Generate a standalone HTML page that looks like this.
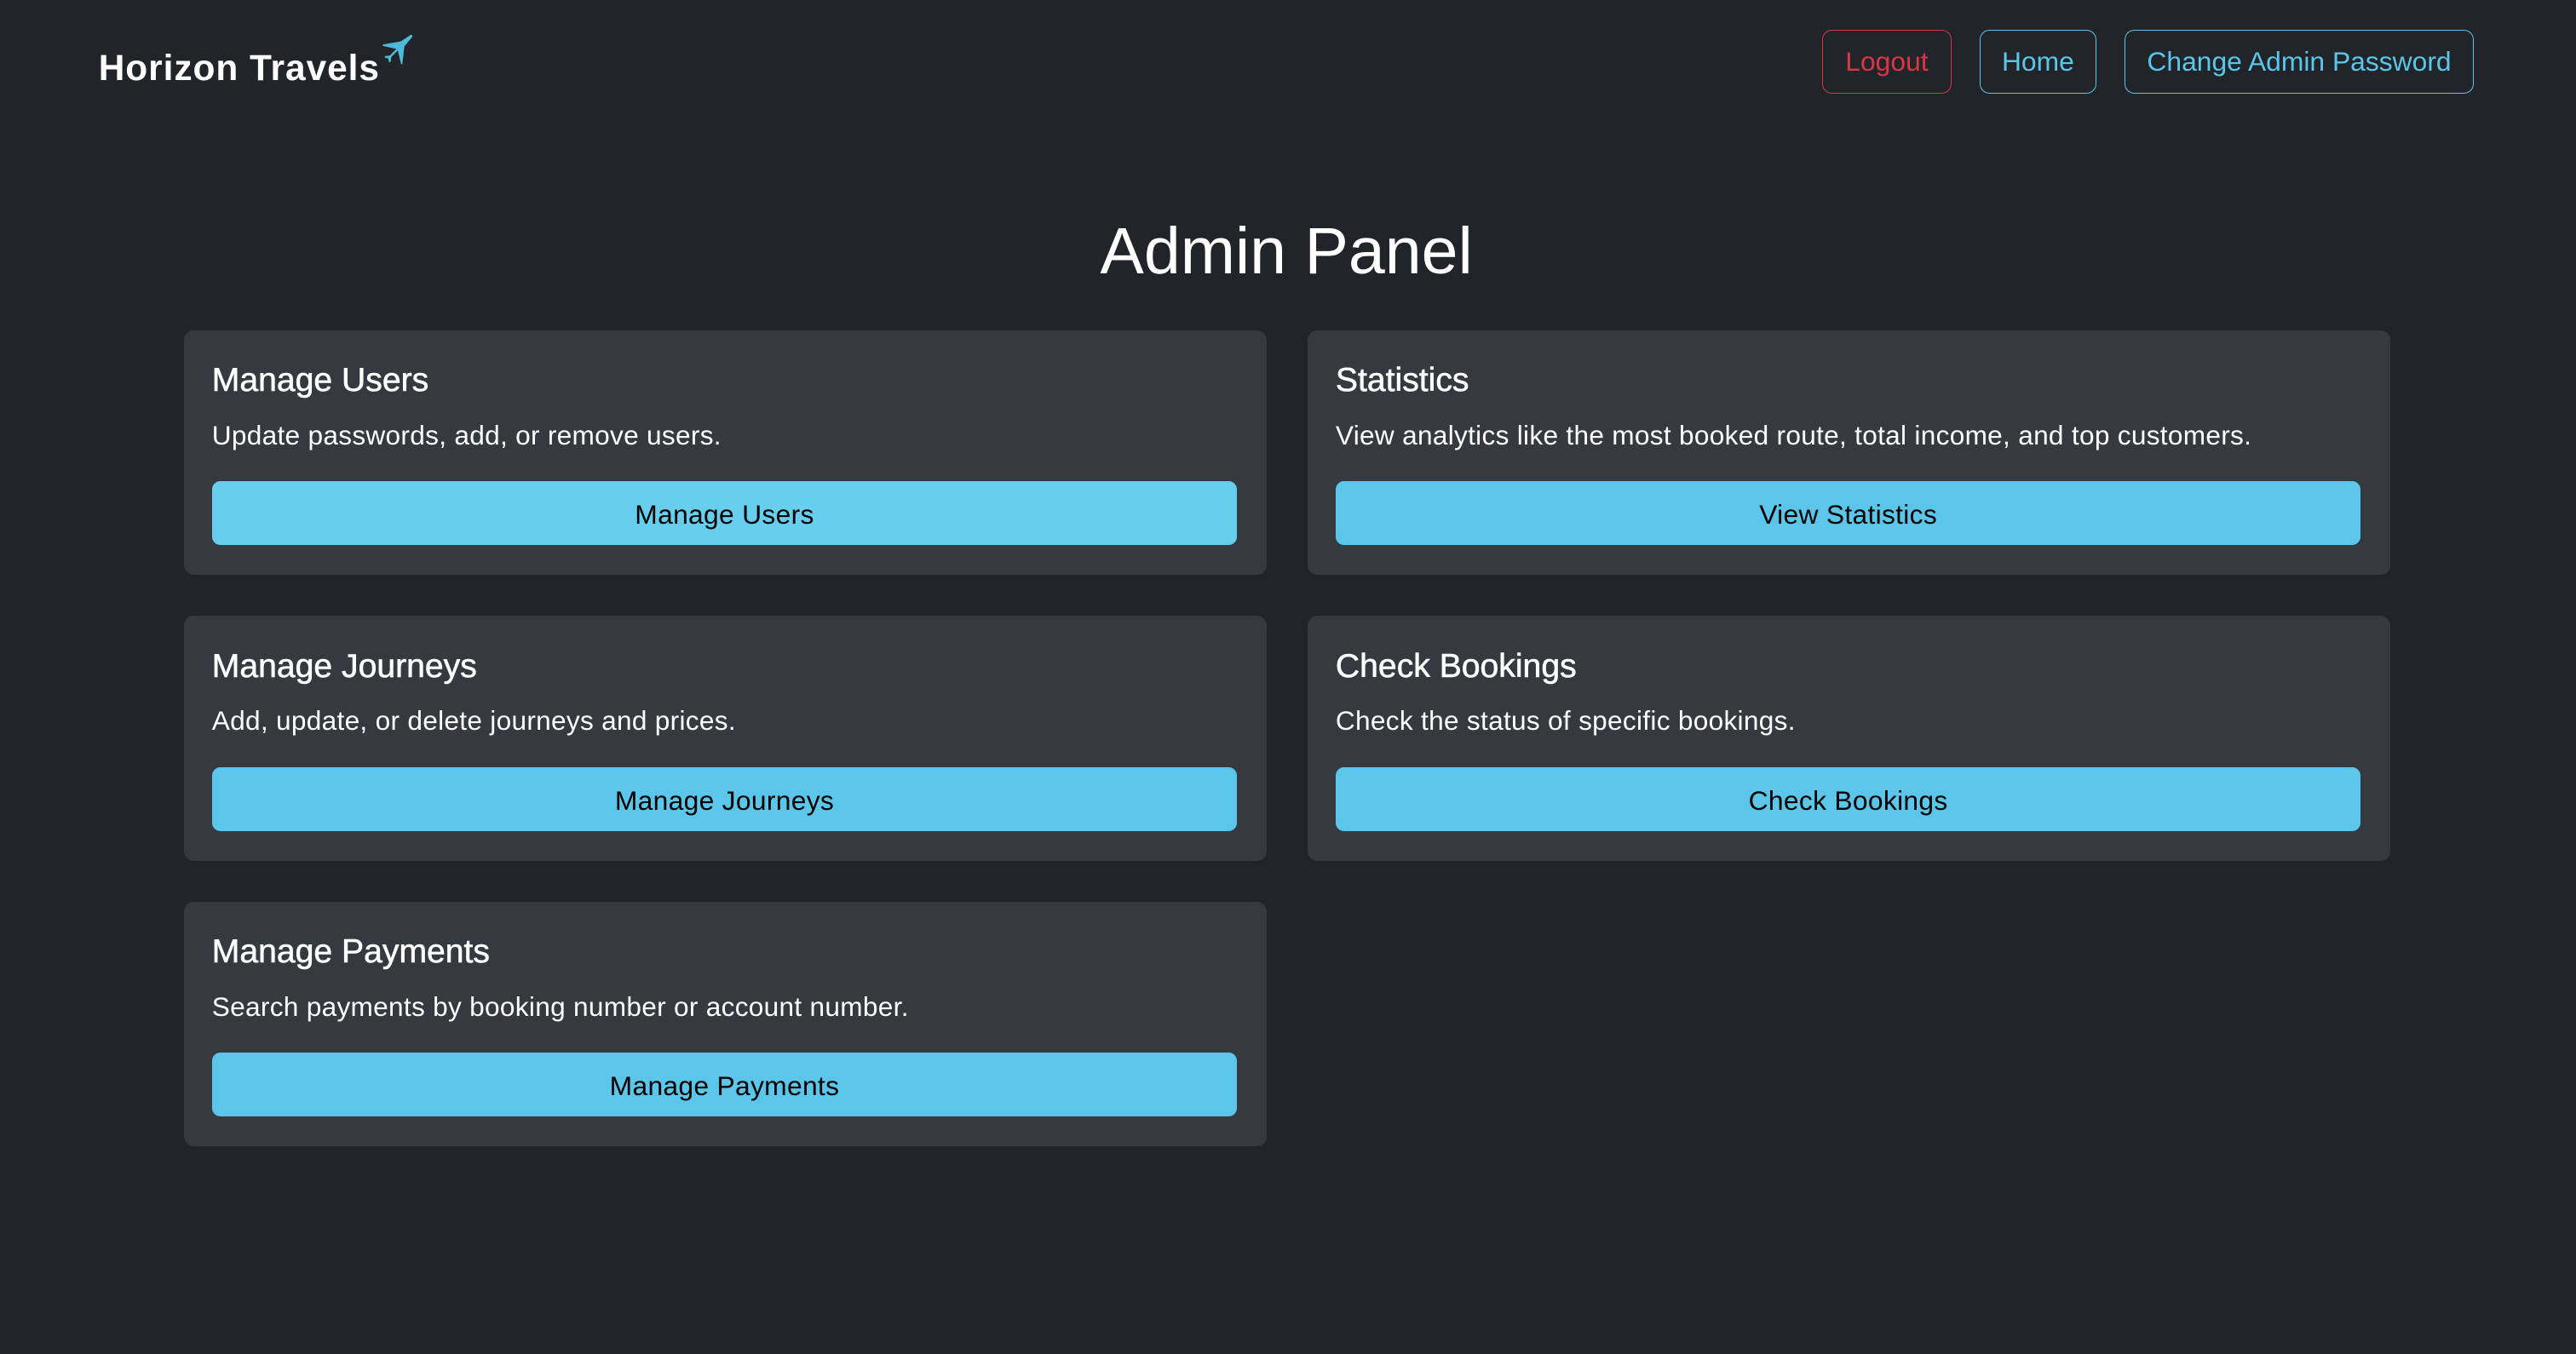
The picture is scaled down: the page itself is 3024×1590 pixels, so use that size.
<!DOCTYPE html>
<html><head><meta charset="utf-8"><style>
html,body{margin:0;padding:0;background:#212529;overflow:hidden}
#w{zoom:1.928571;width:1568px;height:824px;position:relative;background:#212529;font-family:"Liberation Sans",sans-serif;color:#fff}
.logo{position:absolute;left:60px;top:29px;font-size:22px;font-weight:bold;letter-spacing:0.5px}
.plane{position:absolute;left:228px;top:20px}
.nb{position:absolute;top:18px;height:39px;box-sizing:border-box;border:1px solid #5bc6e9;border-radius:6px;color:#5bc6e9;font-size:16.5px;line-height:38px;text-align:center}
h1{position:absolute;left:0;width:1566px;top:129px;margin:0;text-align:center;font-size:40px;font-weight:normal;line-height:48px}
.card{position:absolute;width:659px;height:149px;background:#343a40;border-radius:6px}
.card h2{position:absolute;left:17px;top:19px;margin:0;font-size:20.3px;font-weight:normal;line-height:24px;-webkit-text-stroke:0.3px #fff}
.card p{position:absolute;left:17px;top:54px;margin:0;font-size:16.4px;line-height:20px;letter-spacing:0.15px}
.card .b{position:absolute;left:17px;top:92px;width:624px;height:39px;background:#5bc6e9;border-radius:5px;color:#000;font-size:16.5px;line-height:41px;text-align:center;letter-spacing:0.15px}
</style></head><body><div id="w">
<div class="logo">Horizon Travels</div>
<svg class="plane" width="24" height="24" viewBox="0 0 24 24"><path fill="#4fb9d9" d="M21.5 1.2c1-.6 1.8.2 1.2 1.2L18 8l-1.2 10.5c-.1.7-.8.7-.9 0L14 10.5 10 14.5l-.3 2.8-1 .5-.5-2.4-2.3-.6.4-.9 2.8-.3 4-4L5.2 7.8c-.7-.2-.6-.9.1-1L15.8 5z"/></svg>
<div class="nb" style="left:1109px;width:79px;border-color:#dc3545;color:#dc3545">Logout</div>
<div class="nb" style="left:1205px;width:71px">Home</div>
<div class="nb" style="left:1293px;width:213px">Change Admin Password</div>
<h1>Admin Panel</h1>
<div class="card" style="left:112px;top:201px"><h2>Manage Users</h2><p>Update passwords, add, or remove users.</p><div class="b" style="background:#68ceee">Manage Users</div></div>
<div class="card" style="left:796px;top:201px"><h2>Statistics</h2><p>View analytics like the most booked route, total income, and top customers.</p><div class="b">View Statistics</div></div>
<div class="card" style="left:112px;top:375px"><h2>Manage Journeys</h2><p>Add, update, or delete journeys and prices.</p><div class="b">Manage Journeys</div></div>
<div class="card" style="left:796px;top:375px"><h2>Check Bookings</h2><p>Check the status of specific bookings.</p><div class="b">Check Bookings</div></div>
<div class="card" style="left:112px;top:549px"><h2>Manage Payments</h2><p>Search payments by booking number or account number.</p><div class="b">Manage Payments</div></div>
</div></body></html>
